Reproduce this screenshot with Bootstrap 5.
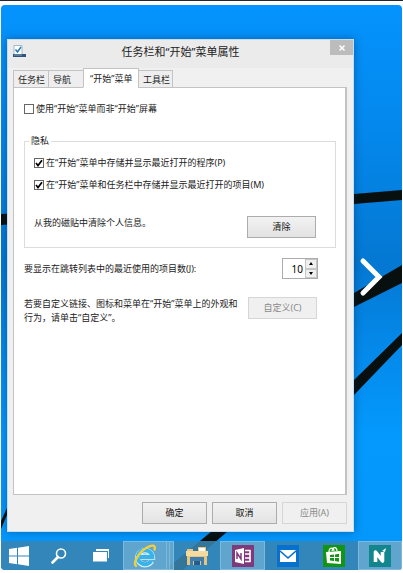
<!DOCTYPE html>
<html lang="zh-CN">
<head>
<meta charset="utf-8">
<meta name="viewport" content="width=device-width, initial-scale=1">
<title>任务栏和“开始”菜单属性</title>
<link href="https://cdn.jsdelivr.net/npm/bootstrap@5.3.0/dist/css/bootstrap.min.css" rel="stylesheet">
<style>
body{font-family:"Noto Sans","Noto Sans CJK SC",sans-serif;font-size:9px;line-height:14px;color:#222;background:#fff;border-top:1px solid #26262e;min-height:100vh;padding:4px 1px 3px}
.desktop{border-radius:4px;background:linear-gradient(180deg,#0493fd 0,#0489ee 20%,#0478d2 46%,#0486e6 58%,#0499fd 76%,#0496fb 100%)}
.branches{z-index:0}
.dialog-area{padding:34px 48px 0 6px;z-index:1}
.dialog-win{background:#f0f0f0;border:1px solid #c9dcea;padding:0 6px 7px 5px;box-shadow:0 0 8px rgba(0,40,90,.45)}
.win-title{height:28px;background:#ebebeb;margin:0 -6px 0 -5px}
.win-title h1{font-size:11px;line-height:24px;font-weight:400;text-align:center}
.win-icon{left:5px;top:5px}
.btn-x{right:0;top:0;width:23px;height:15px;background:#bcbcbc;border:0;padding:0}
.tabs{margin-bottom:-1px}
.tabs .tab{border:1px solid #c3c3c3;background:#eee;border-radius:0;padding:1px 0 1px 4px;height:18px;line-height:15px;color:#222;text-align:left;white-space:nowrap;margin-right:-1px;width:36px}
.tabs .tab.active{height:20px;background:#fff;border-bottom-color:#fff;width:56px;padding-left:6px}
.tabs .tab:last-child{width:35px}
.pane{background:#fff;border:1px solid #c3c3c3;border-right-width:2px;padding:14px 9px 0 10px;min-height:408px}
.opt{gap:2px}
.tick{appearance:none;width:10px;height:10px;border:1px solid #666;background:#fff;margin:0;flex:none}
.tick:checked{background:#fff url("data:image/svg+xml,%3Csvg xmlns='http://www.w3.org/2000/svg' viewBox='0 0 8 8'%3E%3Cpath d='M1 4l2 2.500L7 1.300' fill='none' stroke='%23000' stroke-width='1.7'/%3E%3C/svg%3E") center/8px no-repeat}
.group{border:1px solid #dcdcdc;padding:8px 19px 9px 9px;margin-top:18px}
.group legend{float:none;width:auto;font-size:9px;line-height:14px;margin:0 0 0 -5px;padding:0 2px}
.btn-win{border:1px solid #acacac;border-radius:0;background:linear-gradient(#f2f2f2,#e3e3e3);line-height:14px;padding:3px 0;height:22px;width:69px;color:#111;flex:none}
.btn-win:disabled{background:#f0f0f0;border-color:#d6d6d6;color:#8a8a8a}
.foot{gap:5px;margin-top:7px}
.foot .btn-win{width:65px}
.spin{border:1px solid #acacac;width:36px;height:21px}
.spin input{border:0;width:20px;padding:0;text-align:right;font-size:10px;line-height:18px;background:none}
.spin button{border:1px solid #c6c6c6;background:#f0f0f0;width:12px;flex:1;padding:0;line-height:0;display:flex;align-items:center;justify-content:center}
.num-row{margin:10px 18px 0 0}
.custom-row{margin:18px 19px 0 0}
.taskbar{background:rgba(58,132,176,.88);z-index:1;margin-top:9px}
.task{border:0;background:none;padding:0;height:29px;line-height:0;flex:44 1 0;min-width:0;display:flex;align-items:center;justify-content:center}
.task.first{flex-grow:38}
.task.wide{flex-grow:48}
.task.on{background:rgba(140,195,225,.5);border:1px solid #7eb8da}
.task.on.stack{padding-right:7px;background:linear-gradient(90deg,transparent calc(100% - 7px),#7eb8da 0,#7eb8da calc(100% - 6px),transparent 0,transparent calc(100% - 4px),#7eb8da 0,#7eb8da calc(100% - 3px),transparent 0),rgba(140,195,225,.5)}
.next{right:17px;top:252px;z-index:2;border:0;background:none;padding:0;line-height:0}
</style>
</head>
<body class="d-flex flex-column">
<main class="desktop position-relative flex-grow-1 d-flex flex-column overflow-hidden">
<svg class="branches position-absolute top-0 start-0 w-100 h-100" viewBox="0 0 401 565" preserveAspectRatio="none" aria-hidden="true">
<path d="M0 209L353 189 401 185V195L353 199 0 220zM353 288L401 260V278L353 302zM353 375L401 328V340L353 390zM0 516L6 503V510L0 524zM211 526H227L182 565H164z" fill="#07100f"/>
</svg>
<div class="dialog-area position-relative flex-grow-1">
<section class="dialog-win" aria-labelledby="dlg">
<header class="win-title position-relative">
<svg class="win-icon position-absolute" width="13" height="13" viewBox="0 0 13 13"><path d="M1 .5h8v9H1z" fill="#fff" stroke="#9bbbd0"/><path d="M2.500 4.500l2 2.500L8 2" fill="none" stroke="#2376b5" stroke-width="1.4"/><path d="M0 9h13v3H0z" fill="#31537a"/><path d="M1 10h8" stroke="#84a6be"/></svg>
<h1 id="dlg" class="m-0">任务栏和“开始”菜单属性</h1>
<button class="btn-x position-absolute d-flex align-items-center justify-content-center" aria-label="关闭"><svg width="6" height="6" viewBox="0 0 6 6"><path d="M.5.5l5 5M5.500.5l-5 5" stroke="#fff" stroke-width="1.5"/></svg></button>
</header>
<div class="tabs d-flex align-items-end position-relative" role="tablist">
<button class="tab" role="tab">任务栏</button><button class="tab" role="tab">导航</button><button class="tab active" role="tab" aria-selected="true">“开始”菜单</button><button class="tab" role="tab">工具栏</button>
</div>
<div class="pane">
<div class="opt d-flex align-items-center"><input class="tick" type="checkbox" id="c1"><label for="c1">使用“开始”菜单而非“开始”屏幕</label></div>
<fieldset class="group">
<legend>隐私</legend>
<div class="opt d-flex align-items-center mb-2"><input class="tick" type="checkbox" id="c2" checked><label for="c2">在“开始”菜单中存储并显示最近打开的程序(P)</label></div>
<div class="opt d-flex align-items-center mb-4"><input class="tick" type="checkbox" id="c3" checked><label for="c3">在“开始”菜单和任务栏中存储并显示最近打开的项目(M)</label></div>
<div class="d-flex justify-content-between align-items-start"><span>从我的磁贴中清除个人信息。</span><button class="btn-win">清除</button></div>
</fieldset>
<div class="num-row d-flex justify-content-between align-items-center"><label for="num">要显示在跳转列表中的最近使用的项目数(J):</label>
<div class="spin d-flex justify-content-between"><input id="num" type="text" value="10"><span class="d-flex flex-column"><button aria-label="增加"><svg width="4" height="3" viewBox="0 0 4 3"><path d="M0 3l2-3 2 3z"/></svg></button><button aria-label="减少"><svg width="4" height="3" viewBox="0 0 4 3"><path d="M0 0l2 3 2-3z"/></svg></button></span></div></div>
<div class="custom-row d-flex justify-content-between align-items-start"><span>若要自定义链接、图标和菜单在“开始”菜单上的外观和<br>行为，请单击“自定义”。</span><button class="btn-win" disabled>自定义(C)</button></div>
</div>
<div class="foot d-flex justify-content-end"><button class="btn-win">确定</button><button class="btn-win">取消</button><button class="btn-win" disabled>应用(A)</button></div>
</section>
</div>
<button class="next position-absolute" aria-label="下一张"><svg width="26" height="40" viewBox="0 0 26 40"><path d="M4 4L20 20 4 36" fill="none" stroke="#fff" stroke-width="5" stroke-linecap="round"/></svg></button>
<nav class="taskbar d-flex position-relative" aria-label="任务栏">
<button class="task first" aria-label="开始"><svg width="20" height="20" viewBox="0 0 20 20" fill="#fff"><path d="M0 3l8-1.200V9.500H0zM9 1.700L20 0v9.500H9zM0 10.500h8v7.700L0 17zM9 10.500h11V20L9 18.300z"/></svg></button>
<button class="task" aria-label="搜索"><svg width="16" height="16" viewBox="0 0 16 16" fill="none" stroke="#fff"><circle cx="10" cy="5.500" r="4.500" stroke-width="1.6"/><path d="M7 9L1.500 14.500" stroke-width="2.6" stroke-linecap="round"/></svg></button>
<button class="task" aria-label="任务视图"><svg width="17" height="13" viewBox="0 0 17 13" fill="#fff"><path d="M3 0h13v9h-1V2H3z"/><path d="M0 3h14v9.500H0z"/></svg></button>
<button class="task on stack" aria-label="Internet Explorer"><svg width="24" height="24" viewBox="0 0 24 24" fill="none"><path d="M18.500 17A7.300 7 0 1 1 19.300 13H7" stroke="#d8f3ff" stroke-width="5.4"/><path d="M18.300 16.800A7.300 7 0 1 1 19.300 13H7" stroke="#38b4ea" stroke-width="4"/><path d="M3 22C-.5 18.500 6 8 14 3.500 19 .5 23 1 21.500 5.500" stroke="#f4cf3c" stroke-width="2.4" stroke-linecap="round"/></svg></button>
<button class="task wide" aria-label="文件资源管理器"><svg width="22" height="20" viewBox="0 0 22 20"><path d="M1 3h6v2h5V1h8v4h1v14H1z" fill="#e9c47c"/><path d="M13 2h6v3h-6z" fill="#fff"/><path d="M0 5h22v5H0z" fill="#f6dba0"/><path d="M4 11h14v8h-3v-4H7v4H4z" fill="#3c7fae"/><path d="M8 15h6v4H8z" fill="#285c86"/></svg></button>
<button class="task on" aria-label="OneNote"><svg width="22" height="22" viewBox="0 0 22 22"><path d="M0 0h22v22H0z" fill="#80397b"/><path d="M3 5l9-2v16l-9-2z" fill="#fff"/><path d="M5 14V8l4 6V8" fill="none" stroke="#80397b" stroke-width="1.5"/><path d="M13 5.500h5v11h-5M13 9h5M13 13h5" fill="none" stroke="#fff" stroke-width="1.6"/></svg></button>
<button class="task wide" aria-label="邮件"><svg width="22" height="22" viewBox="0 0 22 22"><path d="M0 0h22v22H0z" fill="#0871ce"/><path d="M3 5h16l-8 7z" fill="#fff"/><path d="M3 7l8 7 8-7v10H3z" fill="#fff"/></svg></button>
<button class="task wide" aria-label="应用商店"><svg width="22" height="22" viewBox="0 0 22 22"><path d="M0 0h22v22H0z" fill="#119512"/><path d="M3 7l15-1v13L4 18z" fill="#fff"/><path d="M6 7c0-5 5-5 5-1M9 6c1-5 5-4 5 0" fill="none" stroke="#fff" stroke-width="1.2"/><path d="M7 10l4-.5V12H7zM12 9.400l4-.6V12h-4zM7 13h4v3l-4-.5zM12 13h4v3.700l-4-.6z" fill="#119512"/></svg></button>
<button class="task on" aria-label="N"><svg width="22" height="22" viewBox="0 0 22 22"><path d="M0 0h22v22H0z" fill="#12868c"/><path d="M6.500 17V7l7 9V7" fill="none" stroke="#fff" stroke-width="3.6" stroke-linejoin="round"/><path d="M13 6l4-3-1 4z" fill="#fff"/></svg></button>
</nav>
</main>
<script src="https://cdn.jsdelivr.net/npm/bootstrap@5.3.0/dist/js/bootstrap.bundle.min.js"></script>
</body>
</html>
